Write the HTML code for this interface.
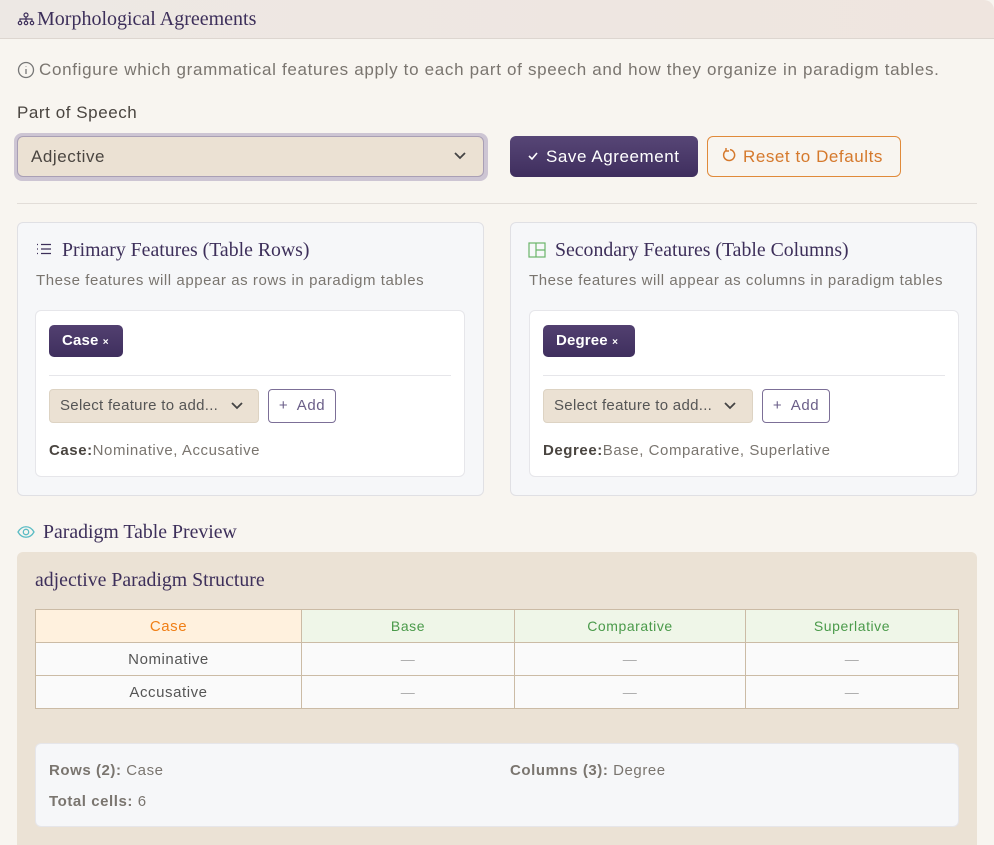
<!DOCTYPE html>
<html style="overflow:hidden;height:845px"><head><meta charset="utf-8"><style>
*{box-sizing:border-box;margin:0;padding:0}
body{width:994px;height:845px;overflow:hidden;background:#f8f5f0;font-family:"Liberation Sans",sans-serif;color:#4a4540;position:relative;letter-spacing:.035em}
.a{position:absolute;white-space:nowrap}
.serif{font-family:"Liberation Serif",serif;color:#3d2f5a;letter-spacing:0}
.hdr{left:0;top:0;width:994px;height:39px;background:linear-gradient(90deg,#ede8e4,#efe5df);border-bottom:1px solid #ddd6d0;border-top-right-radius:10px}
.card{background:#f6f7f9;border:1px solid #e0e0e4;border-radius:6px}
.inner{background:#fff;border:1px solid #e6e6ea;border-radius:6px}
.chip{background:linear-gradient(#524070,#3f2f5e);color:#fff;font-weight:bold;font-size:15px;border-radius:5px;height:32px;line-height:32px;padding-left:13px;letter-spacing:.01em}
.sel{background:#ebe1d3;border:1px solid #ddd3c3;border-radius:4px;height:34px;line-height:32px;font-size:15px;color:#555;padding-left:10px;letter-spacing:.02em}
.add{border:1px solid #7c6f97;border-radius:4px;height:34px;line-height:32px;font-size:15px;color:#6a5e88;background:#fff;text-align:center}
table{border-collapse:collapse;font-size:14px}
td,th{border:1px solid #cbbba5;text-align:center;font-weight:normal;height:33px}
</style></head><body>
<div class="a hdr"></div>
<svg class="a" style="left:17px;top:11px" width="18" height="16" viewBox="0 0 18 16" fill="none" stroke="#3d2f5a" stroke-width="1.2"><circle cx="9" cy="4" r="2"/><circle cx="3" cy="12" r="1.7"/><circle cx="9" cy="12" r="1.7"/><circle cx="15" cy="12" r="1.7"/><path d="M9 6v4M3 10V8h12v2"/></svg>
<div class="a serif" style="left:37px;top:8px;font-size:20px">Morphological Agreements</div>
<svg class="a" style="left:17px;top:61px" width="18" height="18" viewBox="0 0 18 18" fill="none" stroke="#777" stroke-width="1.3"><circle cx="9" cy="9" r="7.5"/><path d="M9 8v5M9 5.2v.5"/></svg>
<div class="a" style="left:39px;top:60px;font-size:17px;color:#7a756f;letter-spacing:.04em">Configure which grammatical features apply to each part of speech and how they organize in paradigm tables.</div>
<div class="a" style="left:17px;top:103px;font-size:17px;color:#4a4540">Part of Speech</div>
<div class="a" style="left:14px;top:133px;width:474px;height:48px;border-radius:8px;background:#cdc5d3"></div>
<div class="a" style="left:17px;top:136px;width:467px;height:41px;background:#ebe1d3;border:1px solid #a99fb5;border-radius:6px;font-size:17px;line-height:39px;padding-left:13px;color:#4a4540">Adjective</div>
<svg class="a" style="left:453px;top:151px" width="14" height="10" viewBox="0 0 14 10" fill="none" stroke="#444" stroke-width="1.8"><path d="M2 2l5 5 5-5"/></svg>
<div class="a" style="left:510px;top:136px;width:188px;height:41px;border-radius:6px;background:linear-gradient(#574676,#3f2e5e);color:#fff;font-size:17px;line-height:41px;padding-left:36px">Save Agreement</div>
<svg class="a" style="left:527px;top:150px" width="12" height="12" viewBox="0 0 12 12" fill="none" stroke="#fff" stroke-width="1.6"><path d="M2 6l3 3 5-6"/></svg>
<div class="a" style="left:707px;top:136px;width:194px;height:41px;border-radius:6px;border:1.3px solid #e08a3a;color:#d5792c;font-size:17px;line-height:39px;padding-left:35px">Reset to Defaults</div>
<svg class="a" style="left:721px;top:147px" width="16" height="16" viewBox="0 0 16 16" fill="none" stroke="#d5792c" stroke-width="1.5"><path d="M5 3.5A5.5 5.5 0 1 0 9 2.6M5 1v3h3"/></svg>
<div class="a" style="left:17px;top:203px;width:960px;height:1px;background:#e2ddd8"></div>

<div class="a card" style="left:17px;top:222px;width:467px;height:274px"></div>
<svg class="a" style="left:36px;top:243px" width="16" height="12" viewBox="0 0 16 12" fill="none" stroke="#3d2f5a" stroke-width="1.2"><path d="M1 1.5h1M1 6h1M1 10.5h1M5 1.5h10M5 6h10M5 10.5h10"/></svg>
<div class="a serif" style="left:62px;top:239px;font-size:19.8px">Primary Features (Table Rows)</div>
<div class="a" style="left:36px;top:272px;font-size:15px;color:#7a756f">These features will appear as rows in paradigm tables</div>
<div class="a inner" style="left:35px;top:310px;width:430px;height:167px"></div>
<div class="a chip" style="left:49px;top:325px;width:74px">Case <span style="font-size:10px">×</span></div>
<div class="a" style="left:49px;top:375px;width:402px;height:1px;background:#e6e6ea"></div>
<div class="a sel" style="left:49px;top:389px;width:210px">Select feature to add...</div>
<svg class="a" style="left:230px;top:401px" width="14" height="10" viewBox="0 0 14 10" fill="none" stroke="#444" stroke-width="1.8"><path d="M2 2l5 5 5-5"/></svg>
<div class="a add" style="left:268px;top:389px;width:68px">+&nbsp; Add</div>
<div class="a" style="left:49px;top:442px;font-size:15px;color:#7a756f"><b style="color:#4a4540">Case:</b>Nominative, Accusative</div>

<div class="a card" style="left:510px;top:222px;width:467px;height:274px"></div>
<svg class="a" style="left:528px;top:242px" width="18" height="16" viewBox="0 0 18 16" fill="none" stroke="#6ab56a" stroke-width="1.2"><rect x="1" y="1" width="16" height="14"/><path d="M8 1v14M8 8h9"/></svg>
<div class="a serif" style="left:555px;top:239px;font-size:19.8px">Secondary Features (Table Columns)</div>
<div class="a" style="left:529px;top:272px;font-size:15px;color:#7a756f">These features will appear as columns in paradigm tables</div>
<div class="a inner" style="left:529px;top:310px;width:430px;height:167px"></div>
<div class="a chip" style="left:543px;top:325px;width:92px">Degree <span style="font-size:10px">×</span></div>
<div class="a" style="left:543px;top:375px;width:402px;height:1px;background:#e6e6ea"></div>
<div class="a sel" style="left:543px;top:389px;width:210px">Select feature to add...</div>
<svg class="a" style="left:723px;top:401px" width="14" height="10" viewBox="0 0 14 10" fill="none" stroke="#444" stroke-width="1.8"><path d="M2 2l5 5 5-5"/></svg>
<div class="a add" style="left:762px;top:389px;width:68px">+&nbsp; Add</div>
<div class="a" style="left:543px;top:442px;font-size:15px;color:#7a756f"><b style="color:#4a4540">Degree:</b>Base, Comparative, Superlative</div>

<svg class="a" style="left:17px;top:525px" width="18" height="14" viewBox="0 0 18 14" fill="none" stroke="#5bbcc4" stroke-width="1.3"><path d="M1 7c4-7 12-7 16 0c-4 7-12 7-16 0z"/><circle cx="9" cy="7" r="2.7"/></svg>
<div class="a serif" style="left:43px;top:521px;font-size:19.8px">Paradigm Table Preview</div>
<div class="a" style="left:17px;top:552px;width:960px;height:293px;background:#ebe2d5;border-radius:6px 6px 0 0"></div>
<div class="a serif" style="left:35px;top:569px;font-size:19.8px">adjective Paradigm Structure</div>
<table class="a" style="left:35px;top:609px;width:924px">
<tr><th style="width:266px;background:#fff1de;color:#f07f16;font-size:15px">Case</th><th style="width:213px;background:#eff6e8;color:#4a9a4a">Base</th><th style="width:231px;background:#eff6e8;color:#4a9a4a">Comparative</th><th style="background:#eff6e8;color:#4a9a4a">Superlative</th></tr>
<tr style="background:#fafafa"><td style="font-size:15px;color:#555">Nominative</td><td style="color:#aaa">—</td><td style="color:#aaa">—</td><td style="color:#aaa">—</td></tr>
<tr style="background:#fafafa"><td style="font-size:15px;color:#555">Accusative</td><td style="color:#aaa">—</td><td style="color:#aaa">—</td><td style="color:#aaa">—</td></tr>
</table>
<div class="a" style="left:35px;top:743px;width:924px;height:84px;background:#f6f7f9;border:1px solid #e6e6ea;border-radius:6px"></div>
<div class="a" style="left:49px;top:762px;font-size:15px;color:#7a756f"><b>Rows (2):</b> Case</div>
<div class="a" style="left:510px;top:762px;font-size:15px;color:#7a756f"><b>Columns (3):</b> Degree</div>
<div class="a" style="left:49px;top:793px;font-size:15px;color:#7a756f"><b>Total cells:</b> 6</div>
</body></html>
